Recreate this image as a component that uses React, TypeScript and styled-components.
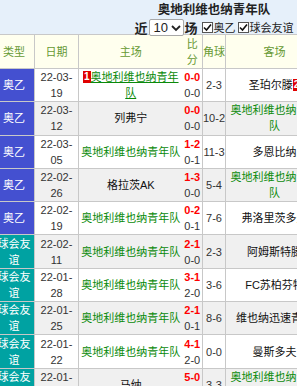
import React from "react";
import styled, { createGlobalStyle } from "styled-components";

const GlobalStyle = createGlobalStyle`
  body {
    margin: 0;
    background: #fff;
    font-family: "Liberation Sans", "Noto Sans CJK SC", sans-serif;
  }
`;

type Match = {
  kind: "league" | "friendly";
  date: [string, string];
  home: string;
  away: string;
  homeBadge?: string;
  awayBadge?: string;
  ft: string;
  ht: string;
  corner: string;
};

const TEAM = "奥地利维也纳青年队";

const matches: Match[] = [
  { kind: "league", date: ["22-03-", "19"], home: TEAM, homeBadge: "1", away: "圣珀尔滕", awayBadge: "2", ft: "0-0", ht: "0-0", corner: "2-3" },
  { kind: "league", date: ["22-03-", "12"], home: "列弗宁", away: TEAM, ft: "0-0", ht: "0-0", corner: "10-2" },
  { kind: "league", date: ["22-03-", "05"], home: TEAM, away: "多恩比纳", ft: "1-2", ht: "0-1", corner: "11-3" },
  { kind: "league", date: ["22-02-", "26"], home: "格拉茨AK", away: TEAM, ft: "1-3", ht: "0-0", corner: "5-4" },
  { kind: "league", date: ["22-02-", "19"], home: TEAM, away: "弗洛里茨多夫", ft: "0-2", ht: "0-1", corner: "7-6" },
  { kind: "friendly", date: ["22-02-", "11"], home: TEAM, away: "阿姆斯特滕", ft: "2-1", ht: "0-0", corner: "2-3" },
  { kind: "friendly", date: ["22-01-", "28"], home: TEAM, away: "FC苏柏芬特", ft: "3-1", ht: "2-0", corner: "3-6" },
  { kind: "friendly", date: ["22-01-", "25"], home: TEAM, away: "维也纳迅速青年", ft: "2-1", ht: "0-1", corner: "8-6" },
  { kind: "friendly", date: ["22-01-", "22"], home: TEAM, away: "曼斯多夫", ft: "4-1", ht: "2-0", corner: "0-0" },
  { kind: "friendly", date: ["22-01-", "15"], home: "马纳", away: TEAM, ft: "5-0", ht: "2-0", corner: "3-3" },
];

const Page = styled.div`
  width: 297px;
  height: 386px;
  overflow: hidden;
`;

const Header = styled.div`
  background: #e6f0fa;
  padding-left: 131px;
  text-align: center;
  height: 34px;
`;

const Title = styled.div`
  font-size: 12.5px;
  font-weight: bold;
  line-height: 17px;
  padding-top: 2px;
  color: #222;
`;

const Filters = styled.div`
  display: flex;
  align-items: center;
  justify-content: center;
  height: 16px;
  font-size: 11px;
  color: #222;
  white-space: nowrap;

  & > * {
    flex-shrink: 0;
  }
`;

const Word = styled.span`
  font-size: 13px;
  font-weight: bold;
`;

const Select = styled.div`
  display: flex;
  align-items: center;
  justify-content: space-between;
  box-sizing: border-box;
  width: 35px;
  height: 17px;
  margin: 1px 1px 0;
  padding: 0 2px 0 4px;
  background: #fff;
  border: 1px solid #a8a8a8;
  border-radius: 2px;
  font-size: 13px;
`;

const CheckBox = styled.span`
  display: inline-flex;
  align-items: center;
  justify-content: center;
  box-sizing: border-box;
  width: 11px;
  height: 11px;
  margin: 0 1px 0 2px;
  border: 1px solid #555;
  background: #fff;
`;

const FirstCheck = styled(CheckBox)`
  margin-left: 4px;
`;

const Label = styled.span`
  font-size: 11px;
`;

const Table = styled.table`
  margin-left: -7px;
  width: 330px;
  table-layout: fixed;
  border-collapse: collapse;
  font-size: 11px;
  line-height: 16px;
  text-align: center;
`;

const HeadCell = styled.th<{ $noLeft?: boolean; $noRight?: boolean }>`
  height: 33px;
  padding: 0;
  font-weight: normal;
  font-size: 11px;
  color: #669933;
  background: #ffffee;
  border: 1px solid #c8c8c8;
  ${(p) => (p.$noLeft ? "border-left: none;" : "")}
  ${(p) => (p.$noRight ? "border-right: none;" : "")}
`;

const Row = styled.tr<{ $alt: boolean }>`
  background: ${(p) => (p.$alt ? "#f0f0f0" : "#fff")};
`;

const Cell = styled.td<{ $noRight?: boolean; $noLeft?: boolean }>`
  height: 32.3px;
  padding: 0;
  border: 1px solid #c8c8c8;
  color: #333;
  overflow: hidden;
  ${(p) => (p.$noRight ? "border-right: none;" : "")}
  ${(p) => (p.$noLeft ? "border-left: none;" : "")}
`;

const CornerCell = styled(Cell)`
  white-space: nowrap;
`;

const TypeCell = styled(Cell)<{ $kind: "league" | "friendly" }>`
  background: ${(p) => (p.$kind === "league" ? "#4450d0" : "#00a2a2")};
  color: #fff;
  overflow: visible;
`;

const Team = styled.span<{ $ours: boolean; $under?: boolean }>`
  color: ${(p) => (p.$ours ? "#0a8a0a" : "#111")};
  text-decoration: ${(p) => (p.$under ? "underline" : "none")};
`;

const Badge = styled.span`
  display: inline-block;
  background: #e00000;
  color: #fff;
  font-weight: bold;
  font-size: 10px;
  line-height: 12px;
  padding: 0 1px;
  vertical-align: 1px;
`;

const Score = styled.div`
  color: #ff0000;
  font-weight: bold;
`;

const Half = styled.div`
  color: #333;
`;

const Tick = () => (
  <svg width="9" height="9" viewBox="0 0 9 9">
    <path d="M1 4.5 L3.5 7 L8 1.5" fill="none" stroke="#111" strokeWidth="1.6" />
  </svg>
);

export default function App() {
  return (
    <Page>
      <GlobalStyle />
      <Header>
        <Title>{TEAM}</Title>
        <Filters>
          <Word>近</Word>
          <Select>
            <span>10</span>
            <svg width="10" height="8" viewBox="0 0 10 8">
              <path d="M1 2 L5 6 L9 2" fill="none" stroke="#222" strokeWidth="1.8" />
            </svg>
          </Select>
          <Word>场</Word>
          <FirstCheck>
            <Tick />
          </FirstCheck>
          <Label>奥乙</Label>
          <CheckBox>
            <Tick />
          </CheckBox>
          <Label>球会友谊</Label>
        </Filters>
      </Header>
      <Table>
        <colgroup>
          <col style={{ width: 41 }} />
          <col style={{ width: 44 }} />
          <col style={{ width: 104 }} />
          <col style={{ width: 20 }} />
          <col style={{ width: 23 }} />
          <col style={{ width: 98 }} />
        </colgroup>
        <thead>
          <tr>
            <HeadCell>类型</HeadCell>
            <HeadCell>日期</HeadCell>
            <HeadCell $noRight>主场</HeadCell>
            <HeadCell $noLeft>比分</HeadCell>
            <HeadCell>角球</HeadCell>
            <HeadCell>客场</HeadCell>
          </tr>
        </thead>
        <tbody>
          {matches.map((m, i) => (
            <Row key={i} $alt={i % 2 === 1}>
              <TypeCell $kind={m.kind}>{m.kind === "league" ? "奥乙" : "球会友谊"}</TypeCell>
              <Cell>
                {m.date[0]}
                <br />
                {m.date[1]}
              </Cell>
              <Cell $noRight>
                {m.homeBadge && <Badge>{m.homeBadge}</Badge>}
                <Team $ours={m.home === TEAM} $under={!!m.homeBadge}>
                  {m.home}
                </Team>
              </Cell>
              <Cell $noLeft>
                <Score>{m.ft}</Score>
                <Half>{m.ht}</Half>
              </Cell>
              <CornerCell>{m.corner}</CornerCell>
              <Cell>
                <Team $ours={m.away === TEAM}>{m.away}</Team>
                {m.awayBadge && <Badge>{m.awayBadge}</Badge>}
              </Cell>
            </Row>
          ))}
        </tbody>
      </Table>
    </Page>
  );
}
